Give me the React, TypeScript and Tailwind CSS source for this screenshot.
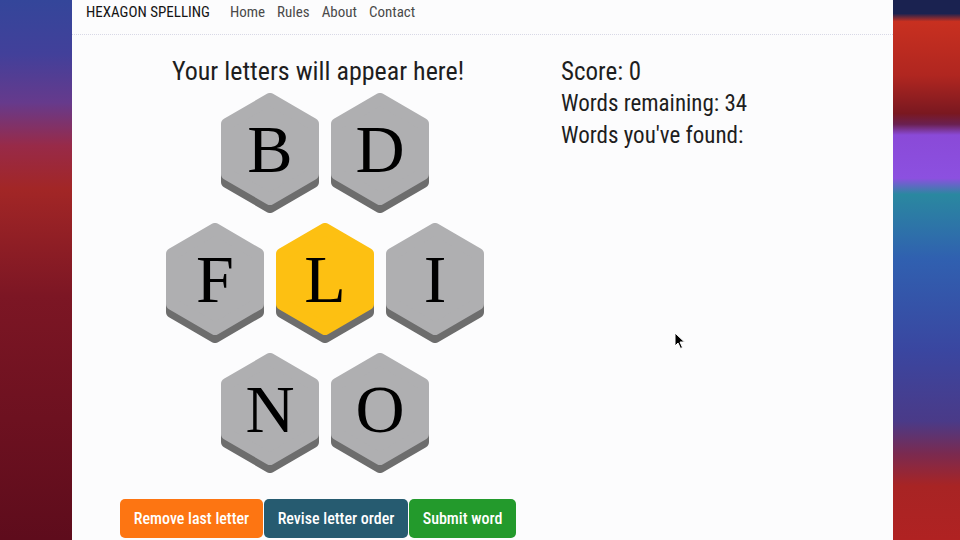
import React from "react";

type Tile = { letter: string; center?: boolean };

const rows: Tile[][] = [
  [{ letter: "B" }, { letter: "D" }],
  [{ letter: "F" }, { letter: "L", center: true }, { letter: "I" }],
  [{ letter: "N" }, { letter: "O" }],
];

const hexPoints = "50,6 93,31 93,81 50,106 7,81 7,31";

function Hex({ letter, center }: Tile) {
  const face = center ? "#fdc012" : "#afafb1";
  return (
    <div className="relative h-[120px] w-[100px]">
      <svg width="100" height="120" viewBox="0 0 100 120" className="block">
        <polygon
          points={hexPoints}
          transform="translate(0,8)"
          fill="#6d6d6d"
          stroke="#6d6d6d"
          strokeWidth="12"
          strokeLinejoin="round"
        />
        <polygon
          points={hexPoints}
          fill={face}
          stroke={face}
          strokeWidth="12"
          strokeLinejoin="round"
        />
      </svg>
      <span className="absolute left-0 top-0 flex h-[112px] w-[100px] items-center justify-center font-[family-name:'Liberation_Serif',serif] text-[68px] leading-none text-black">
        {letter}
      </span>
    </div>
  );
}

export default function App() {
  return (
    <div className="flex h-[540px] w-[960px] overflow-hidden font-[family-name:Roboto,'Liberation_Sans',sans-serif] font-stretch-condensed">
      <div className="w-[72px] shrink-0 bg-[linear-gradient(180deg,#34469a_0%,#42409a_10%,#663a8c_19%,#982a48_27%,#a22626_35%,#7c1624_55%,#5e0c1c_100%)]" />

      <div className="relative flex w-[821px] shrink-0 flex-col bg-[#fcfcfd]">
        <nav className="flex h-[35px] items-start border-b border-dotted border-[#d8d8e6] pl-[14px] pt-[1px]">
          <span className="text-[15px] leading-[22px] text-[#151515]">HEXAGON SPELLING</span>
          <div className="ml-[20px] flex gap-[12px] text-[15px] leading-[22px] text-[#4a4a4a]">
            <span>Home</span>
            <span>Rules</span>
            <span>About</span>
            <span>Contact</span>
          </div>
        </nav>

        <div className="flex pl-[48px]">
          <div className="flex w-[396px] flex-col">
            <h1 className="mt-[20px] text-center text-[26px] leading-[32px] text-[#1e1e1e]">
              Your letters will appear here!
            </h1>
            <div className="ml-[14px] mt-[6px] flex flex-col items-center gap-[10px]">
              {rows.map((row, i) => (
                <div key={i} className="flex gap-[10px]">
                  {row.map((t) => (
                    <Hex key={t.letter} {...t} />
                  ))}
                </div>
              ))}
            </div>
            <div className="mt-[26px] flex gap-[1px] text-[16px] font-medium text-white">
              <button className="h-[39px] w-[143px] rounded-[5px] bg-[#fd7512]">Remove last letter</button>
              <button className="h-[39px] w-[144px] rounded-[5px] bg-[#265b70]">Revise letter order</button>
              <button className="h-[39px] w-[107px] rounded-[5px] bg-[#239a2c]">Submit word</button>
            </div>
          </div>

          <div className="ml-[45px] mt-[21px] flex flex-col text-[#1e1e1e]">
            <p className="text-[25px] leading-[32px]">Score: 0</p>
            <p className="text-[23px] leading-[32px]">Words remaining: 34</p>
            <p className="text-[23px] leading-[32px]">Words you've found:</p>
          </div>
        </div>

        <svg
          className="absolute left-[602px] top-[332px]"
          width="12"
          height="18"
          viewBox="0 0 12 18"
        >
          <path d="M1 1 L1 14 L4 11 L6.5 16.5 L8.5 15.5 L6 10 L10.5 10 Z" fill="#000" stroke="#fff" strokeWidth="1" />
        </svg>
      </div>

      <div className="flex-1 bg-[linear-gradient(180deg,#1a2250_0%,#1a2250_2.5%,#c83020_4%,#b02620_14%,#7a1820_21%,#6a2050_23%,#8a4ad8_25%,#8c50e0_33%,#2a88a0_36%,#3060b0_48%,#3a46a0_65%,#4a3a88_78%,#7a2a50_84%,#a82424_90%,#b02222_100%)]" />
    </div>
  );
}
